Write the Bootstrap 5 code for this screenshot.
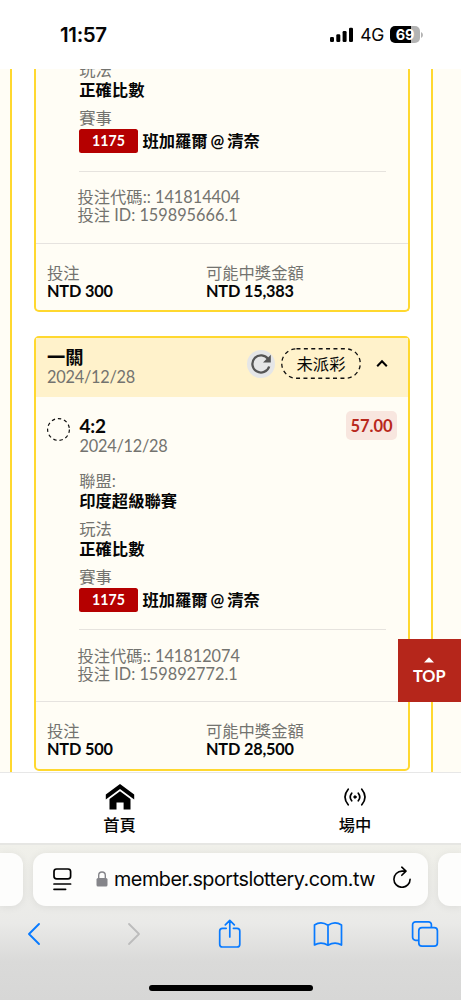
<!DOCTYPE html>
<html lang="zh-Hant">
<head>
<meta charset="utf-8">
<meta name="viewport" content="width=device-width, initial-scale=1">
<title>member.sportslottery.com.tw</title>
<link href="https://cdn.jsdelivr.net/npm/bootstrap@5.3.0/dist/css/bootstrap.min.css" rel="stylesheet">
<style>
body{width:461px;height:1000px;overflow:hidden;background:#fff;color:#060606;font-family:Lato,"Noto Sans CJK TC",sans-serif;font-size:16.3px;line-height:18px}
svg{display:block;flex:none}
.status{height:69px;padding:0 38px 0 60px;font-family:Inter,sans-serif}
.clock{font-size:20.5px;font-weight:600;letter-spacing:-.35px;line-height:24px}
.cell{font-size:17.5px;line-height:24px;letter-spacing:-.3px;margin-left:6px}
.batt{width:30px;height:17px;border-radius:5px;background:linear-gradient(90deg,#000 70%,#b3b3b3 70%);color:#fff;font-size:14.5px;font-weight:700;line-height:17px;letter-spacing:-.2px;margin-left:6px}
.batt-tip{margin-left:1px}
.view{height:703px}
.side{background:#fffdf5;border:0 solid #ffd82f}
.side-l{width:12px;border-right-width:2.5px}
.side-r{width:30px;border-left-width:2.5px}
.tickets{width:376px;gap:24px;margin:0 21px 1.5px 22px}
.ticket{background:#fffdf5;border:2.5px solid #ffd82f;border-radius:5px;flex:none}
.ticket-cut{height:243px;border-top:0;border-radius:0 0 5px 5px}
.ticket-full{height:435px}
.t-head{background:#fff2cb;height:59.5px;padding:9px 20px 0 11px;flex:none}
.t-title{font-size:18.3px;line-height:20px}
.t-state{height:34px}
.gray{color:#73736f}
.date{letter-spacing:-.22px;line-height:19px}
.pill{width:80px;height:31px;margin:0 15px 0 6px}
.leg{padding:14px 11px 0 11px;height:72px;flex:none}
.ring{margin-top:6.5px}
.pick-box{margin-left:9.5px;padding-top:5px}
.pick{font-size:19px;line-height:20px;letter-spacing:-.2px}
.odds{width:51px;height:29px;border-radius:5px;background:#f8e6df;color:#b8281c;font-size:16.5px}
.info{padding-left:43.3px;flex:none}
.pair{height:48px}
.pair > div{height:20px;line-height:20px}
.pair-first{padding-top:2px;height:50px}
.pair > .game{height:24px;line-height:24px;margin-top:1px;word-spacing:-1px}
.num{width:58.5px;height:23.5px;background:#b50000;border-radius:2.5px;font-size:14.2px;line-height:23.5px;margin-right:4.7px}
.rule{height:1px;background:#e6e3de;margin:14.2px 22px 0 43px;flex:none}
.codes{padding:16.5px 0 0 41.5px;height:71px;flex:none}
.t-foot{border-top:1.5px solid #e6e3df;height:67px;padding:20px 0 0 11px;flex:none}
.t-foot .fw-bold{letter-spacing:-.18px}
.t-foot .c1{width:159px}
.top-btn{position:absolute;right:0;bottom:70px;width:63.5px;height:63px;background:#b5261b;font-size:16.3px;padding-top:18px;gap:4px}
.tabs{height:71px;border-top:1.5px solid #e7e7e7;flex:none}
.tab{font-weight:500;flex:none}
.tab-home{width:239px;padding-top:10px;gap:5px}
.tab-live{width:222px;padding:14px 0 0 10px;gap:9px}
.browser{height:157px;background:linear-gradient(#f0f0ea 0,#eaeae8 50%,#dadad9 75%,#d7d7d6 100%);border-top:2px solid #e6e6e3;flex:none;font-family:Inter,sans-serif}
.urls{padding-top:7.5px;gap:10px}
.pane{height:53px;background:#fdfdfc;box-shadow:0 1px 9px rgba(0,0,0,.07);flex:none}
.pane-l{width:23px;border-radius:0 12px 12px 0}
.pane-r{width:24px;border-radius:12px 0 0 12px}
.pane-m{width:395px;border-radius:13px;padding:0 16px 0 20px}
.lock{margin:0 6px 0 24px}
.url{font-size:19.8px;line-height:26px;letter-spacing:-.48px;white-space:nowrap}
.tools{height:30px;margin-top:13px;padding-left:27px}
.fwd{margin-left:86px}
.share{margin-left:77px}
.book{margin-left:71px}
.stack{margin-left:68px}
.home-bar{width:164px;height:6px;border-radius:3px;background:#000;margin:36px auto 0}
</style>
</head>
<body class="d-flex flex-column">
<header class="status d-flex align-items-center justify-content-between flex-shrink-0">
  <div class="clock">11:57</div>
  <div class="d-flex align-items-center">
    <svg width="24" height="16" viewBox="0 0 24 16"><rect x="0" y="10" width="4" height="5" rx="1.2"/><rect x="6.3" y="7.3" width="4" height="7.7" rx="1.2"/><rect x="12.6" y="4" width="4" height="11" rx="1.2"/><rect x="19" y=".8" width="4" height="14.2" rx="1.2"/></svg>
    <div class="cell">4G</div>
    <div class="batt text-center">69</div>
    <svg class="batt-tip" width="2" height="6" viewBox="0 0 2 6"><path d="M0 0Q2 1 2 3T0 6Z" fill="#b3b3b3"/></svg>
  </div>
</header>

<main class="view d-flex position-relative overflow-hidden flex-shrink-0">
  <div class="side side-l"></div>
  <div class="tickets d-flex flex-column justify-content-end">
    <section class="ticket ticket-cut d-flex flex-column justify-content-end">
      <div class="info">
        <div class="pair"><div class="gray">玩法</div><div class="fw-bold">正確比數</div></div>
        <div class="pair"><div class="gray">賽事</div>
          <div class="game d-flex fw-bold"><span class="num text-white text-center">1175</span>班加羅爾 @ 清奈</div></div>
      </div>
      <div class="rule"></div>
      <div class="codes gray"><div>投注代碼:: 141814404</div><div>投注 ID: 159895666.1</div></div>
      <div class="t-foot d-flex">
        <div class="c1"><div class="gray">投注</div><div class="fw-bold">NTD 300</div></div>
        <div><div class="gray">可能中獎金額</div><div class="fw-bold">NTD 15,383</div></div>
      </div>
    </section>

    <section class="ticket ticket-full d-flex flex-column">
      <div class="t-head d-flex justify-content-between">
        <div><div class="t-title fw-bold">一關</div><div class="gray date">2024/12/28</div></div>
        <div class="t-state d-flex align-items-center">
          <svg width="28" height="28" viewBox="0 0 28 28"><circle cx="14" cy="14" r="14" fill="#e5e6e7"/><path d="M21.2 9.2A8.6 8.6 0 1 0 22.2 16.5" fill="none" stroke="#555" stroke-width="2.3"/><path d="M23.8 4.8V12.6H16Z" fill="#555"/></svg>
          <div class="pill position-relative d-flex align-items-center justify-content-center">
            <svg class="position-absolute top-0 start-0" width="80" height="31" viewBox="0 0 80 31"><rect x=".75" y=".75" width="78.5" height="29.5" rx="14.7" fill="none" stroke="#111" stroke-width="1.3" stroke-dasharray="4 3.4"/></svg>
            <span>未派彩</span>
          </div>
          <svg width="12" height="9" viewBox="0 0 12 9"><path d="M1.2 7.2 6 2.2 10.8 7.2" fill="none" stroke="#000" stroke-width="2"/></svg>
        </div>
      </div>
      <div class="leg d-flex align-items-start">
        <svg class="ring" width="23" height="23" viewBox="0 0 23 23"><circle cx="11.5" cy="11.5" r="10.9" fill="none" stroke="#111" stroke-width="1.2" stroke-dasharray="3.4 2.9"/></svg>
        <div class="pick-box"><div class="pick fw-bold">4:2</div><div class="gray date">2024/12/28</div></div>
        <div class="odds fw-bold ms-auto d-flex align-items-center justify-content-center">57.00</div>
      </div>
      <div class="info">
        <div class="pair pair-first"><div class="gray">聯盟:</div><div class="fw-bold">印度超級聯賽</div></div>
        <div class="pair"><div class="gray">玩法</div><div class="fw-bold">正確比數</div></div>
        <div class="pair"><div class="gray">賽事</div>
          <div class="game d-flex fw-bold"><span class="num text-white text-center">1175</span>班加羅爾 @ 清奈</div></div>
      </div>
      <div class="rule"></div>
      <div class="codes gray"><div>投注代碼:: 141812074</div><div>投注 ID: 159892772.1</div></div>
      <div class="t-foot d-flex">
        <div class="c1"><div class="gray">投注</div><div class="fw-bold">NTD 500</div></div>
        <div><div class="gray">可能中獎金額</div><div class="fw-bold">NTD 28,500</div></div>
      </div>
    </section>
  </div>
  <div class="side side-r"></div>
  <div class="top-btn text-white fw-bold d-flex flex-column align-items-center">
    <svg width="10" height="6" viewBox="0 0 10 6"><path d="M5 .3 10 5.5H0Z" fill="#fff"/></svg>
    <div>TOP</div>
  </div>
</main>

<nav class="tabs d-flex">
  <div class="tab tab-home d-flex flex-column align-items-center">
    <svg width="30" height="28" viewBox="0 0 30 28"><path d="M15 1 29.2 11.4V16.4L15 6 .8 16.4V11.4Z"/><path d="M15 8.2 25.5 16V26.5H18.6V19.5H11.5V26.5H4.5V16Z"/></svg>
    <div>首頁</div>
  </div>
  <div class="tab tab-live d-flex flex-column align-items-center">
    <svg width="24" height="20" viewBox="0 0 24 20" fill="none" stroke="#000" stroke-width="1.7" stroke-linecap="round"><circle cx="12" cy="10" r="1.2" fill="#000" stroke-width="1"/><path d="M8.7 6.2Q5.7 10 8.7 13.8M15.3 6.2Q18.3 10 15.3 13.8M5.2 2.2Q-1.2 10 5.2 17.8M18.8 2.2Q25.2 10 18.8 17.8"/></svg>
    <div>場中</div>
  </div>
</nav>

<footer class="browser">
  <div class="urls d-flex">
    <div class="pane pane-l"></div>
    <div class="pane pane-m d-flex align-items-center">
      <svg width="19" height="23" viewBox="0 0 19 23" fill="none" stroke="#000" stroke-width="1.7" stroke-linecap="round"><rect x="1" y="1" width="16.6" height="9.8" rx="2.6"/><path d="M1 16H17.6M1 21.3H12.6"/></svg>
      <svg class="lock" width="12" height="16" viewBox="0 0 12 16"><rect x=".5" y="7" width="11" height="8.5" rx="1.5" fill="#85858a"/><path d="M2.7 8V4.3a3.3 3.3 0 0 1 6.6 0V8" fill="none" stroke="#85858a" stroke-width="1.4"/></svg>
      <div class="url">member.sportslottery.com.tw</div>
      <svg class="ms-auto mb-1" width="20" height="22" viewBox="0 0 20 22" fill="none" stroke="#000" stroke-width="1.6" stroke-linecap="round" stroke-linejoin="round"><path d="M13.6 5.1H10A8.1 8.1 0 1 0 18.1 13.2M9.8 1.2 14 5.1 9.8 9.3"/></svg>
    </div>
    <div class="pane pane-r"></div>
  </div>
  <div class="tools d-flex align-items-center">
    <svg width="14" height="24" viewBox="0 0 14 24" fill="none" stroke="#087aff" stroke-width="1.9" stroke-linecap="round" stroke-linejoin="round"><path d="M12 2 2 12 12 22"/></svg>
    <svg class="fwd" width="14" height="24" viewBox="0 0 14 24" fill="none" stroke="#bcbcbc" stroke-width="1.8" stroke-linecap="round" stroke-linejoin="round"><path d="M2 2 12 12 2 22"/></svg>
    <svg class="share" width="24" height="30" viewBox="0 0 24 30" fill="none" stroke="#087aff" stroke-width="1.7" stroke-linecap="round" stroke-linejoin="round"><path d="M8.2 9.3H4.5A2.8 2.8 0 0 0 1.7 12.1V25.2A2.8 2.8 0 0 0 4.5 28H19A2.8 2.8 0 0 0 21.8 25.2V12.1A2.8 2.8 0 0 0 19 9.3H15.4M11.8 18V1.3M7.3 5.8 11.8 1.3 16.3 5.8"/></svg>
    <svg class="book" width="30" height="26" viewBox="0 0 30 26" fill="none" stroke="#087aff" stroke-width="1.7" stroke-linejoin="round"><path d="M15 4.2Q8-.5 1.5 4V24Q8 20 15 24.2Q22 20 28.5 24V4Q22-.5 15 4.2V24.2"/></svg>
    <svg class="stack" width="28" height="28" viewBox="0 0 28 28" fill="none" stroke="#087aff" stroke-width="1.7" stroke-linejoin="round"><rect x="7.8" y="7.6" width="18.6" height="18.6" rx="3.2"/><path d="M7.8 20.3H4.6A3 3 0 0 1 1.6 17.3V4.8A3 3 0 0 1 4.6 1.8H17.4A3 3 0 0 1 20.4 4.8V7.6"/></svg>
  </div>
  <div class="home-bar"></div>
</footer>
<script src="https://cdn.jsdelivr.net/npm/bootstrap@5.3.0/dist/js/bootstrap.bundle.min.js"></script>
</body>
</html>
